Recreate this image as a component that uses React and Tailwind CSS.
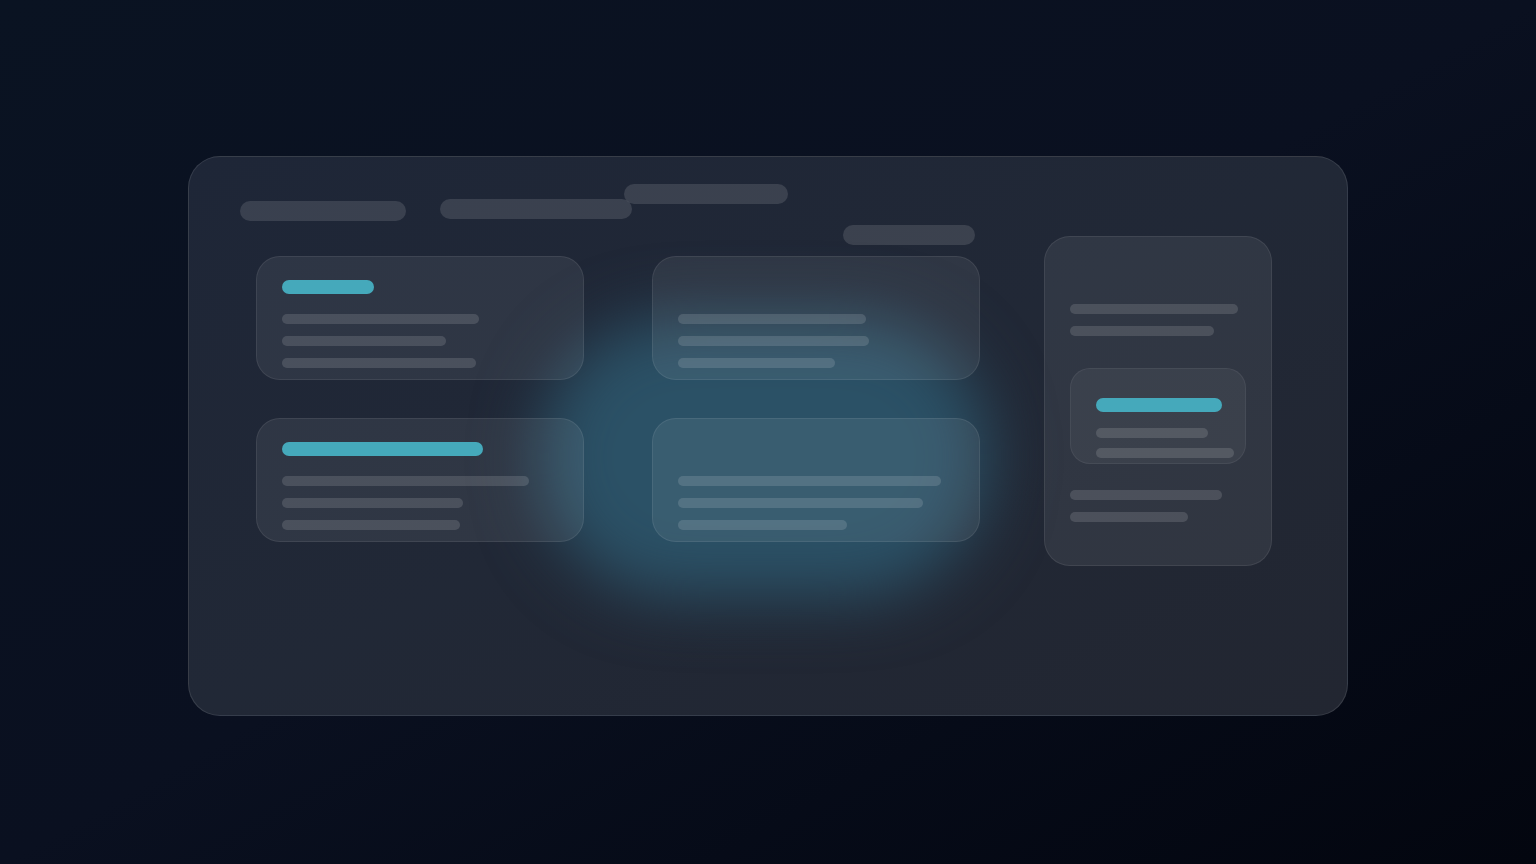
const Bar = ({ w, className = "" }) => (
  <div
    className={`h-[10px] rounded-full bg-white/[0.13] ${className}`}
    style={{ width: w }}
  />
);

const Card = ({ accent, lines }) => (
  <div className="h-[124px] rounded-[24px] border border-white/[0.08] bg-white/[0.07] pl-[25px] pt-[23px]">
    <div
      className={`h-[14px] rounded-full ${accent ? "bg-[#45a9bb]" : "bg-transparent"}`}
      style={{ width: accent || 10 }}
    />
    <div className="mt-[20px] flex flex-col gap-[12px]">
      {lines.map((w, i) => (
        <Bar key={i} w={w} />
      ))}
    </div>
  </div>
);

const SideCard = () => (
  <div className="h-[330px] w-[228px] rounded-[26px] border border-white/[0.08] bg-white/[0.07] pl-[25px] pt-[67px]">
    <div className="flex flex-col gap-[12px]">
      <Bar w={168} />
      <Bar w={144} />
    </div>
    <div className="mt-[32px] h-[96px] w-[176px] rounded-[20px] border border-white/[0.06] bg-white/[0.05] pl-[25px] pt-[29px]">
      <div className="h-[14px] w-[126px] rounded-full bg-[#45a9bb]" />
      <div className="mt-[16px] flex flex-col gap-[10px]">
        <Bar w={112} />
        <Bar w={138} />
      </div>
    </div>
    <div className="mt-[26px] flex flex-col gap-[12px]">
      <Bar w={152} />
      <Bar w={118} />
    </div>
  </div>
);

export default function App() {
  return (
    <div className="min-h-screen w-full bg-gradient-to-br from-[#0a1322] via-[#0a1020] to-[#03060f] pt-[156px] font-['Inter',sans-serif]">
      <div className="relative mx-auto h-[560px] w-[1160px] overflow-hidden rounded-[32px] border border-white/[0.1] bg-gradient-to-br from-[#1e2637] via-[#212836] to-[#222631]">
        {/* teal glow behind the cards */}
        <div className="absolute left-[350px] top-[160px] h-[280px] w-[450px] rounded-full bg-[#2b5166] blur-[32px]" />

        <div className="relative -ml-px -mt-px">
          <div className="flex h-[80px] items-start">
            <div className="ml-[52px] mt-[45px] h-[20px] w-[166px] rounded-full bg-white/[0.12]" />
            <div className="relative z-10 ml-[34px] mt-[43px] h-[20px] w-[192px] rounded-full bg-white/[0.12]" />
            <div className="ml-[-8px] mt-[28px] h-[20px] w-[164px] rounded-full bg-white/[0.12]" />
            <div className="ml-[55px] mt-[69px] h-[20px] w-[132px] rounded-full bg-white/[0.12]" />
          </div>

          <div className="flex items-start pl-[68px]">
            <div className="mt-[20px] grid grid-cols-[328px_328px] gap-x-[68px] gap-y-[38px]">
              <Card accent={92} lines={[197, 164, 194]} />
              <Card lines={[188, 191, 157]} />
              <Card accent={201} lines={[247, 181, 178]} />
              <Card lines={[263, 245, 169]} />
            </div>
            <div className="ml-[64px]">
              <SideCard />
            </div>
          </div>
        </div>
      </div>
    </div>
  );
}
